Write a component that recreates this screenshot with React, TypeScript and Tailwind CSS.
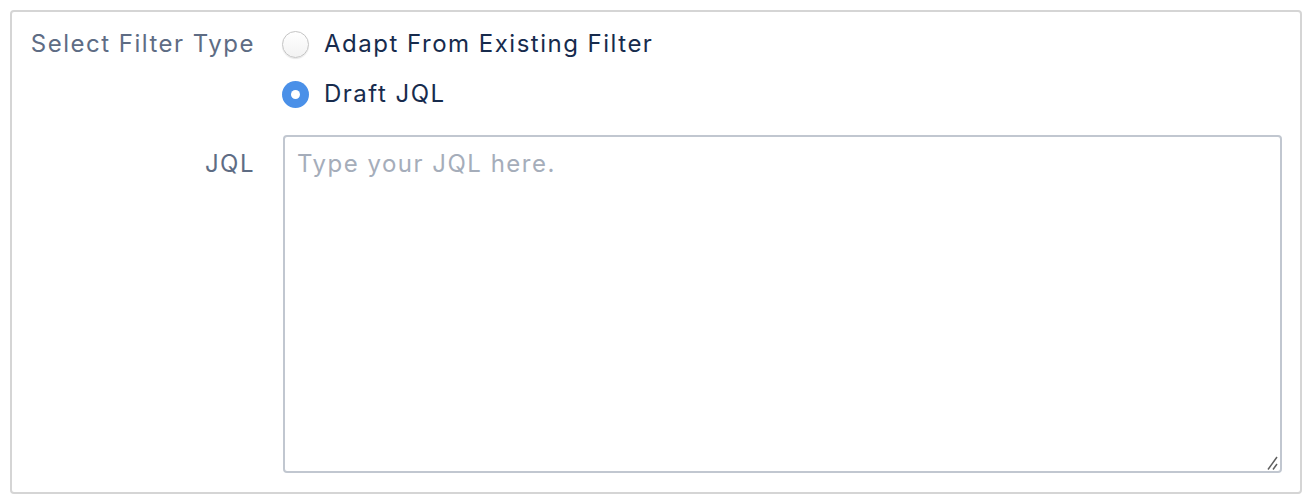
import { useState } from 'react';

const font = { fontFamily: 'Inter, "Liberation Sans", sans-serif' };

const Radio = ({ checked, label, onSelect }: { checked: boolean; label: string; onSelect: () => void }) => (
  <label className="flex h-[50px] cursor-pointer items-center gap-[15px]" onClick={onSelect}>
    {checked ? (
      <span className="flex h-[27px] w-[27px] items-center justify-center rounded-full bg-[#4a90e8]">
        <span className="h-[9px] w-[9px] rounded-full bg-white" />
      </span>
    ) : (
      <span className="h-[27px] w-[27px] rounded-full border border-[#c4c4c4] bg-gradient-to-b from-white to-[#f2f2f2] shadow-[0_1px_1px_rgba(0,0,0,0.1)]" />
    )}
    <span className="text-[24px] leading-[30px] tracking-[1.5px] text-[#172b4d]">{label}</span>
  </label>
);

export default function App() {
  const [type, setType] = useState('draft');

  return (
    <div className="bg-white p-[10px]" style={font}>
      <div className="h-[484px] w-[1292px] rounded-[4px] border-2 border-[#d5d5d5] pb-[19px] pr-[18px] pt-[7px]">
        <div className="grid grid-cols-[242px_1fr] gap-x-[28px]">
          <div className="-mr-[1px] flex h-[50px] items-center justify-end text-[24px] tracking-[1.5px] text-[#5e6c84]">
            Select Filter Type
          </div>
          <div>
            <Radio checked={type === 'adapt'} label="Adapt From Existing Filter" onSelect={() => setType('adapt')} />
            <Radio checked={type === 'draft'} label="Draft JQL" onSelect={() => setType('draft')} />
          </div>

          <div className="-mr-[1px] mt-[16px] pt-[11px] text-right text-[24px] leading-[36px] tracking-[1.5px] text-[#5e6c84]">JQL</div>
          <div className="relative mt-[16px] ml-[1px] h-[338px]">
            <textarea
              className="h-full w-full resize-none rounded-[4px] border-2 border-[#c1c7d0] px-[12px] py-[9px] text-[24px] leading-[36px] tracking-[1.5px] text-[#172b4d] outline-none placeholder:text-[#a5adba]"
              placeholder="Type your JQL here."
            />
            <svg className="pointer-events-none absolute bottom-[2px] right-[2px] h-[18px] w-[18px]" viewBox="0 0 18 18">
              <path d="M6 16.5 L15 4 M11 16.5 L15 11" stroke="#5f5f5f" strokeWidth="1.5" fill="none" />
            </svg>
          </div>
        </div>
      </div>
    </div>
  );
}
